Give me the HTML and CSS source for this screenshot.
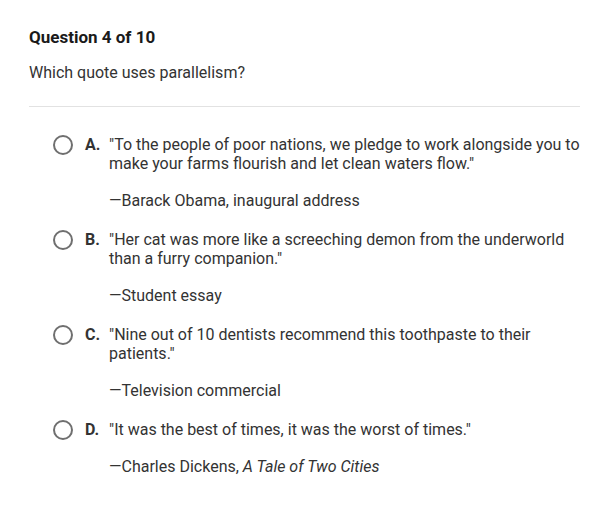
FILE: index.html
```html
<!DOCTYPE html>
<html>
<head>
<meta charset="utf-8">
<link rel="stylesheet" href="styles.css">
</head>
<body>
<div class="quiz">
  <h1 class="title">Question 4 of 10</h1>
  <p class="prompt">Which quote uses parallelism?</p>
  <hr class="divider">
  <ul class="options">
    <li class="option">
      <span class="radio"></span>
      <span class="letter">A.</span>
      <div class="body">
        <p class="quote">"To the people of poor nations, we pledge to work alongside you to make your farms flourish and let clean waters flow."</p>
        <p class="source">—Barack Obama, inaugural address</p>
      </div>
    </li>
    <li class="option">
      <span class="radio"></span>
      <span class="letter">B.</span>
      <div class="body">
        <p class="quote">"Her cat was more like a screeching demon from the underworld than a furry companion."</p>
        <p class="source">—Student essay</p>
      </div>
    </li>
    <li class="option">
      <span class="radio"></span>
      <span class="letter">C.</span>
      <div class="body">
        <p class="quote">"Nine out of 10 dentists recommend this toothpaste to their patients."</p>
        <p class="source">—Television commercial</p>
      </div>
    </li>
    <li class="option">
      <span class="radio"></span>
      <span class="letter">D.</span>
      <div class="body">
        <p class="quote">"It was the best of times, it was the worst of times."</p>
        <p class="source">—Charles Dickens, <em>A Tale of Two Cities</em></p>
      </div>
    </li>
  </ul>
</div>
</body>
</html>
```

FILE: styles.css
```css
html, body {
  margin: 0;
  padding: 0;
  background: #ffffff;
}
body {
  font-family: Roboto, "Liberation Sans", sans-serif;
  color: #333333;
}
.quiz {
  padding: 27px 30px 0 29px;
}
.title {
  margin: 0;
  font-size: 17px;
  font-weight: 700;
  line-height: 20px;
  color: #1a1a1a;
}
.prompt {
  margin: 16px 0 0;
  font-size: 16px;
  line-height: 20px;
  color: #333333;
}
.divider {
  margin: 23px 0 0;
  border: 0;
  border-top: 1px solid #e2e2e2;
  height: 0;
}
.options {
  list-style: none;
  margin: 28px 0 0;
  padding: 0;
}
.option {
  display: flex;
  align-items: flex-start;
  margin-bottom: 20px;
  font-size: 16px;
  line-height: 19px;
}
.radio {
  flex: none;
  width: 16px;
  height: 16px;
  border: 2px solid #6f6f6f;
  border-radius: 50%;
  margin: 0 12px 0 24px;
}
.letter {
  flex: none;
  width: 24px;
  font-weight: 700;
  color: #333333;
}
.body {
  flex: 1;
}
.quote {
  margin: 0;
}
.source {
  margin: 18px 0 0;
}
.source em {
  font-style: italic;
}
```
